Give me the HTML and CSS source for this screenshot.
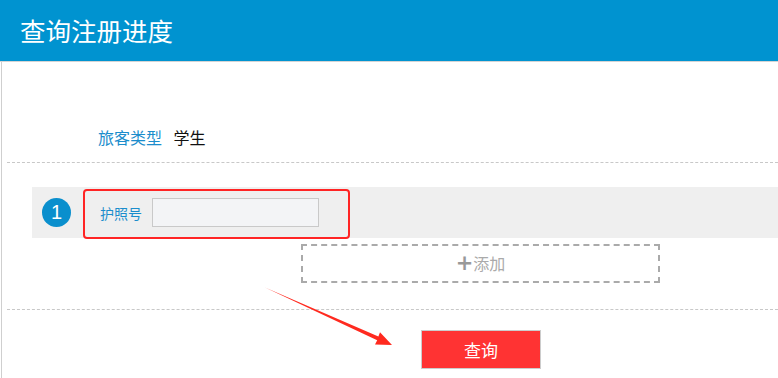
FILE: index.html
```html
<!DOCTYPE html>
<html lang="zh-CN">
<head>
  <meta charset="UTF-8" />
  <meta name="viewport" content="width=device-width, initial-scale=1.0"/>
  <title>查询注册进度</title>
  <link rel="stylesheet" href="styles.css">
</head>
<body>
  <div class="page-header">
    <h1>查询注册进度</h1>
  </div>

  <div class="content">
    <div class="type-row">
      <span class="type-label">旅客类型</span>
      <span class="type-value">学生</span>
    </div>

    <!-- 旅客列表 -->
    <div class="passenger-row">
      <span class="index">1</span>
      <label class="field-label">护照号</label>
      <input type="text" class="field-input" />
      <div class="highlight-box"></div>
    </div>

    <div class="add-btn"><span class="plus">+</span>添加</div>

    <div class="actions">
      <button class="query-btn">查询</button>
    </div>
  </div>

  <svg class="arrow" width="778" height="378" viewBox="0 0 778 378">
    <polygon points="265,287.5 378.4,336.4 380,332.2 392,345 375,344.4 377.2,340.3" fill="#ff2a1f" />
  </svg>
</body>
</html>
```

FILE: styles.css
```css
body {
  margin: 0;
  font-family: "Noto Sans CJK SC", "Liberation Sans", sans-serif;
  background-color: white;
  position: relative;
  height: 378px;
  overflow: hidden;
}

.page-header {
  height: 61px;
  background-color: #0093d0;
  border-bottom: 1px solid #d4d4d4;
  padding-left: 20px;
}

.page-header h1 {
  margin: 0;
  color: white;
  font-size: 25.5px;
  font-weight: normal;
  line-height: 60px;
}

.content {
  margin-left: 1px;
  border-left: 1px solid #cfcfcf;
  padding-left: 5px;
  height: 316px;
}

.type-row {
  padding: 65px 0 15px 91px;
  line-height: 20px;
  font-size: 16px;
  border-bottom: 1px dashed #c8c8c8;
}

.type-label {
  color: #1b8dcc;
  margin-right: 8px;
}

.type-value {
  color: #111;
}

.passenger-row {
  position: relative;
  display: flex;
  align-items: center;
  height: 51px;
  margin: 24px 0 0 25px;
  padding-left: 10px;
  background-color: #efefef;
}

.index {
  width: 29px;
  height: 29px;
  border-radius: 50%;
  background-color: #0a8fcd;
  color: white;
  font-family: "Liberation Sans", sans-serif;
  font-size: 20px;
  line-height: 29px;
  text-align: center;
}

.field-label {
  margin-left: 29px;
  color: #1b8dcc;
  font-size: 14px;
}

.field-input {
  box-sizing: border-box;
  width: 167px;
  height: 29px;
  margin-left: 10px;
  border: 1px solid #c9c9c9;
  background-color: #f3f4f6;
}

.highlight-box {
  position: absolute;
  left: 51px;
  top: 2px;
  width: 267px;
  height: 50px;
  box-sizing: border-box;
  border: 2px solid #ff2424;
  border-radius: 4px;
}

.add-btn {
  box-sizing: border-box;
  width: 359px;
  height: 39px;
  margin: 6px 0 0 294px;
  border: 2px dashed #aaaaaa;
  color: #aaaaaa;
  font-size: 16px;
  line-height: 35px;
  text-align: center;
}

.plus {
  font-family: "DejaVu Sans", sans-serif;
  font-weight: bold;
  font-size: 21px;
  color: #999;
  vertical-align: top;
}

.actions {
  margin-top: 26px;
  padding-top: 20px;
  border-top: 1px dashed #c8c8c8;
}

.query-btn {
  box-sizing: border-box;
  width: 120px;
  height: 39px;
  margin-left: 414px;
  border: 1px solid #cccccc;
  background-color: #ff3333;
  color: white;
  font-family: "Noto Sans CJK SC", sans-serif;
  font-size: 17px;
}

.arrow {
  position: absolute;
  left: 0;
  top: 0;
  pointer-events: none;
}
```
